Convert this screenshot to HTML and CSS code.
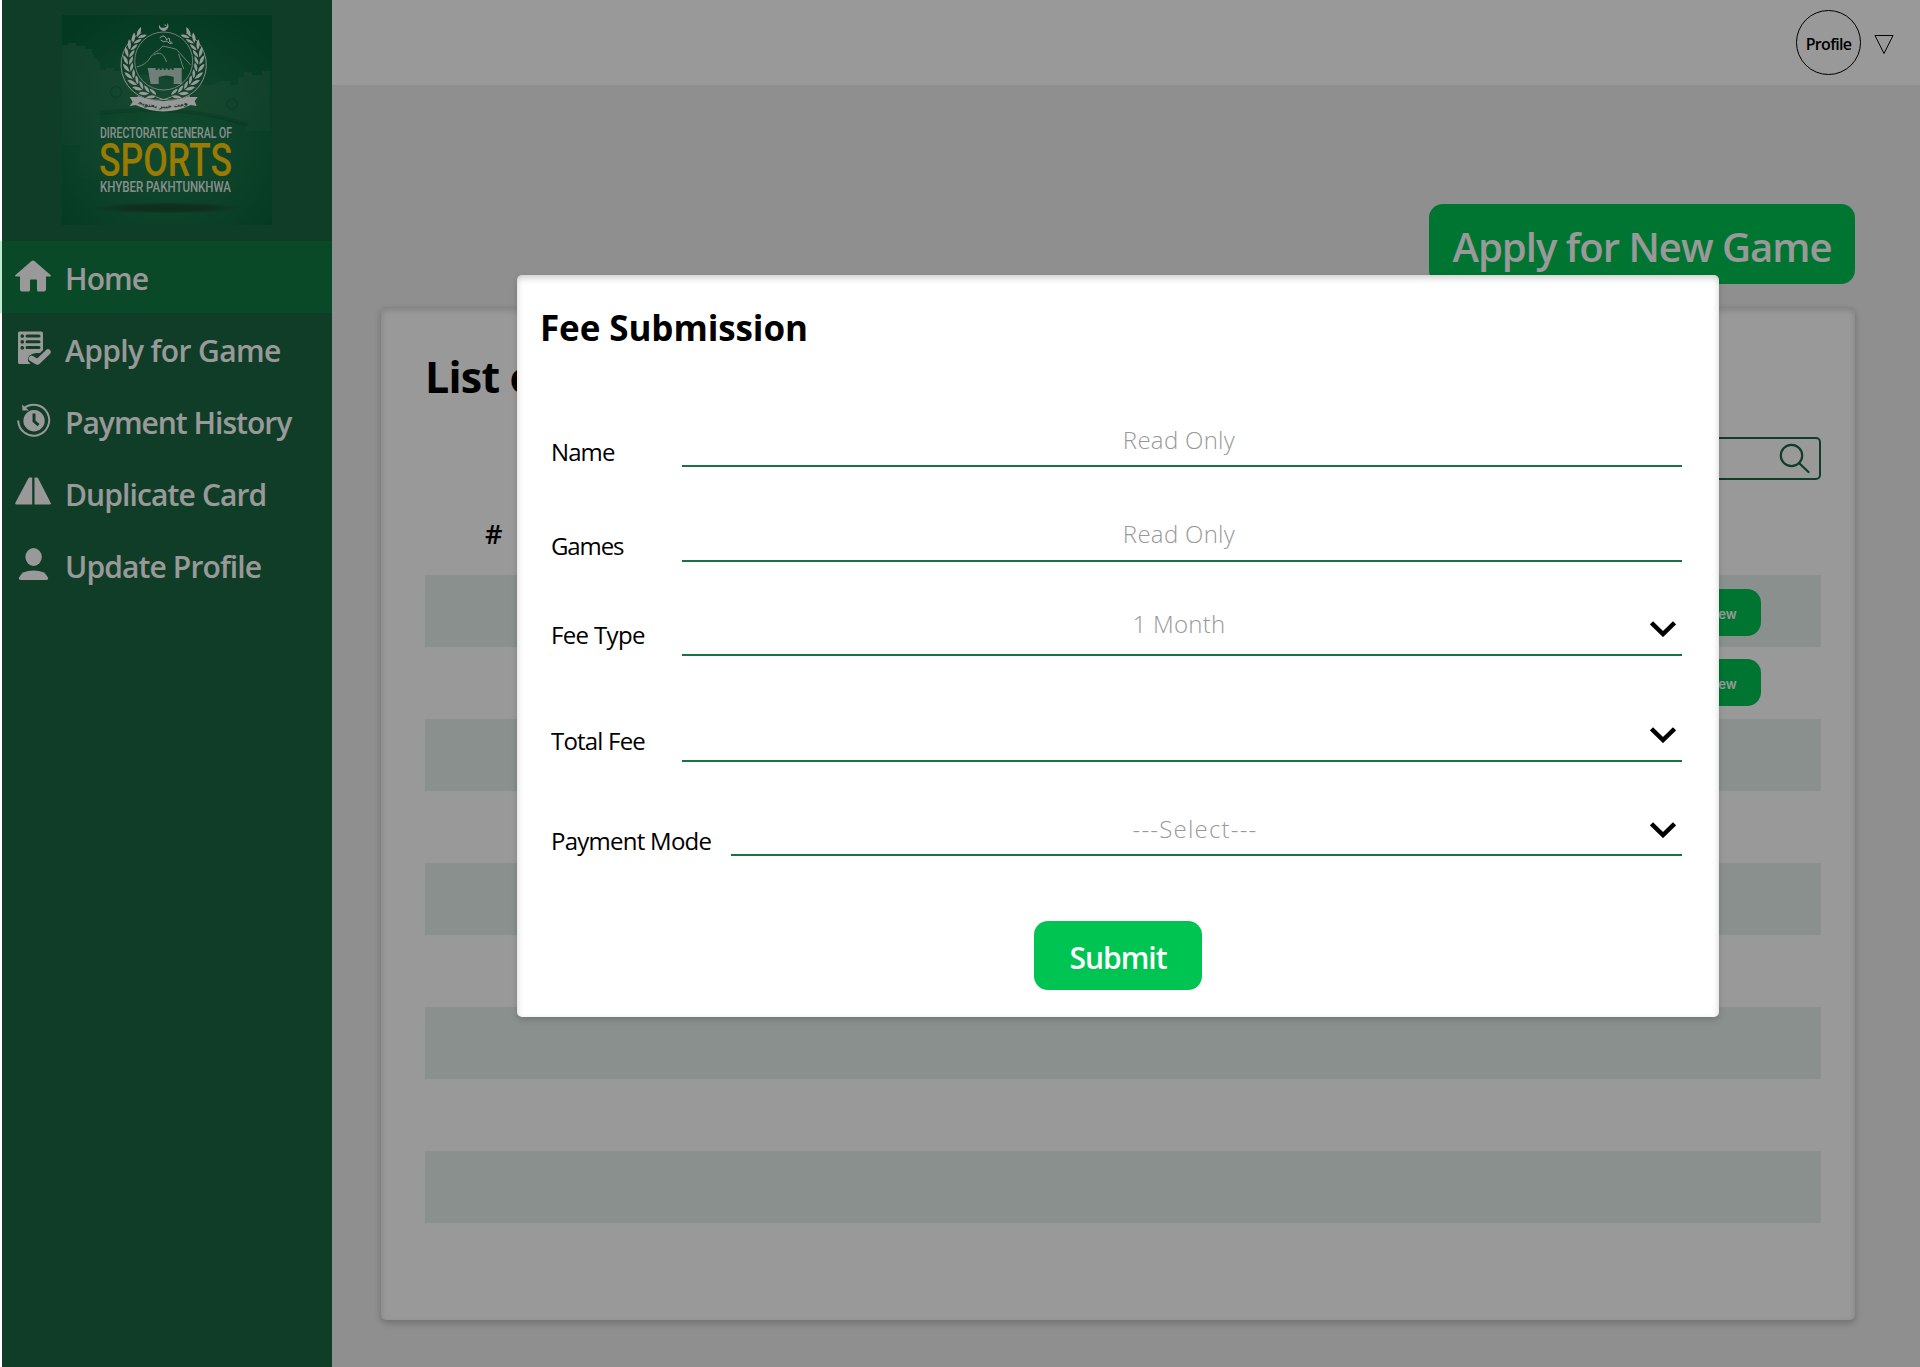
FILE: index.html
```html
<!DOCTYPE html>
<html lang="en">
<head>
<meta charset="utf-8">
<title>Directorate General of Sports</title>
<link rel="stylesheet" href="styles.css">
</head>
<body>
<div class="app">
  <aside class="sidebar">
    <div class="brand">
      <svg class="logo" viewBox="0 0 210 210">
        <defs>
          <radialGradient id="glow" cx="50%" cy="60%" r="70%">
            <stop offset="0" stop-color="#1e7d4e"/><stop offset=".6" stop-color="#136c43"/><stop offset="1" stop-color="#065f37"/>
          </radialGradient>
          <radialGradient id="floor"><stop offset="0" stop-color="#1c4a32"/><stop offset=".6" stop-color="#1c4a32" stop-opacity=".8"/><stop offset="1" stop-color="#1c4a32" stop-opacity="0"/></radialGradient>
          <linearGradient id="wall" x1="0" y1="0" x2="0" y2="1"><stop offset="0" stop-color="#4b8466" stop-opacity=".35"/><stop offset="1" stop-color="#4b8466" stop-opacity=".05"/></linearGradient>
          <g id="leaf">
            <path d="M-5-36.500Q-2.500-42 4.500-42Q2.500-37-5-36.500Z"/>
            <path d="M-5-35.500Q0-36.500 4-32Q-1-30.500-5-35.500Z"/>
          </g>
          <g id="branch">
            <use href="#leaf" transform="rotate(-40)"/><use href="#leaf" transform="rotate(-52)"/><use href="#leaf" transform="rotate(-64)"/><use href="#leaf" transform="rotate(-76)"/><use href="#leaf" transform="rotate(-88)"/><use href="#leaf" transform="rotate(-100)"/><use href="#leaf" transform="rotate(-112)"/><use href="#leaf" transform="rotate(-124)"/><use href="#leaf" transform="rotate(-136)"/><use href="#leaf" transform="rotate(-148)"/><use href="#leaf" transform="rotate(-160)"/>
            <path d="M-23-29A36 36 0 0 0 8 37" fill="none" stroke="#fff" stroke-width=".9"/>
          </g>
        </defs>
        <rect width="210" height="210" fill="url(#glow)"/>
        <path d="M0 30h6v-2h8v3h9v3h7v5l8 9v7h6v-2h8v3h8v4h30l40 10h20l8-4h10v4h8v-8h6v-5h8v3h10v-4h8v60h-25v-7Q120 88 38 99v65H18v-34H0Z" fill="url(#wall)"/>
        <path d="M38 98Q120 88 186 110" fill="none" stroke="#0a4e2e" stroke-width="4" opacity=".3"/>
        <g fill="none" stroke="#0b5532" stroke-width="1.500" opacity=".4"><circle cx="54" cy="77" r="5.500"/><circle cx="170" cy="89" r="5"/></g>
        <g transform="translate(101.700 46)" fill="#fff">
          <g transform="scale(.97)"><use href="#branch"/><use href="#branch" transform="scale(-1 1)"/></g>
          <g fill="none" stroke="#fff" stroke-width=".7">
            <circle r="29"/>
            <path d="M-27 6C-20 4-17 2-13-4S-4-10-1-15L8-13Q13-13 16-8L27 4M-10-6Q-4-10 0-5L3 1M15-7L20 8"/>
            <path d="M-4-23Q1-28 3-21Q6-25 6-21Q5-18 8-19M-3-21Q0-18 3-20Q6-16 9-18" stroke-width="1"/>
          </g>
          <path d="M-16 7h8v2h2v-1.500h2V9h2V7.500h2V9h2V7.500h2V9h2V7.500h2V9h2V7h8v16h-8v-7q-7-3-15 0v7h-8Z" fill-opacity=".7"/>
          <path d="M-4.500-36.500A4.700 4.700 0 1 0 3.500-38A4 4 0 1 1-4.500-36.500ZM1-37l2 1.500-2 .5Z"/>
          <path d="M-34 36l8 0v-1Q0 45 26 35v1h8l-3 4 2 5-6-1Q0 57-28 44l-6 1 3-4Z"/>
          <path id="ribbon" d="M-24 43.500Q0 51 24 43.500" fill="none"/>
          <text class="motto" text-anchor="middle"><textPath href="#ribbon" startOffset="50%">حکومت خیبر پختونخوا</textPath></text>
        </g>
        <g class="logo-text">
          <text x="38" y="122.500" font-size="14.500" textLength="132" lengthAdjust="spacingAndGlyphs">DIRECTORATE GENERAL OF</text>
          <text class="gold" x="37" y="160.500" font-size="46" textLength="133" lengthAdjust="spacingAndGlyphs">SPORTS</text>
          <text x="38" y="177" font-size="15.500" textLength="131" lengthAdjust="spacingAndGlyphs">KHYBER PAKHTUNKHWA</text>
        </g>
        <ellipse cx="105" cy="193" rx="74" ry="5.500" fill="url(#floor)"/>
      </svg>
    </div>
    <nav class="nav">
      <a class="nav-item active"><svg class="ico" viewBox="0 0 36 36"><path d="M18 1.500Q19 1.500 20 2.500L35.500 16Q36.500 17.500 35 17.500H31V30.500Q31 32.500 29 32.500H23.500Q22 32.500 22 31V21.500Q22 20.500 21 20.500H16Q15 20.500 15 21.500V31Q15 32.500 13.500 32.500H7Q5 32.500 5 30.500V17.500H1Q-.5 17.500.5 16L16 2.500Q17 1.500 18 1.500Z"/></svg><span class="t-home">Home</span></a>
      <a class="nav-item"><svg class="ico" viewBox="0 0 36 36"><path fill-rule="evenodd" d="M4.500.5H26Q28 .5 28 2.500V19L25 22H21Q12 23 13 30L15.500 33H4.500Q3 33 3 31.500V2Q3 .5 4.500.5ZM12 3.500a1.500 1.500 0 0 0 0 3H24a1.500 1.500 0 0 0 0-3ZM12 9.200a1.500 1.500 0 0 0 0 3H24a1.500 1.500 0 0 0 0-3ZM12 15a1.500 1.500 0 0 0 0 3H24a1.500 1.500 0 0 0 0-3ZM7.200 3.200a1.800 1.800 0 1 0 .1 0ZM7.200 9a1.800 1.800 0 1 0 .1 0ZM7.200 15a1.800 1.800 0 1 0 .1 0Z"/><path d="M16.500 27.500L22.500 31L33 21" fill="none" stroke="#fff" stroke-width="5.500" stroke-linecap="round" stroke-linejoin="round"/></svg><span class="t-apply">Apply for Game</span></a>
      <a class="nav-item"><svg class="ico" viewBox="0 0 36 36"><path fill-rule="evenodd" d="M19 7a10.700 10.700 0 1 0 .1 0ZM17.500 10.500h3v7l4 3.500-2 2.300-5-4.500Z"/><path d="M8.500 5.500A15.500 15.500 0 1 1 3.200 17.500" fill="none" stroke="#fff" stroke-width="2"/><path d="M7 1.500L7.500 7.500H14Z"/></svg><span class="t-pay">Payment History</span></a>
      <a class="nav-item"><svg class="ico" viewBox="0 0 36 36"><path d="M14.500 2.500H17.200V29.500H1.500Q-.3 29.500.5 27.500L13 4Q13.500 2.500 14.500 2.500ZM22 2.500H19.500V29.500H34.500Q36.800 29.500 35.500 27.500L23.500 4Q23 2.500 22 2.500Z"/></svg><span class="t-dup">Duplicate Card</span></a>
      <a class="nav-item"><svg class="ico" viewBox="0 0 36 36"><ellipse cx="18.600" cy="10" rx="8.200" ry="9"/><path d="M6 33Q3.500 33 4 30.500Q6.500 23.500 18.500 23.500T33 30.500Q33.500 33 31 33Z"/></svg><span class="t-upd">Update Profile</span></a>
    </nav>
  </aside>
  <div class="content">
    <header class="topbar">
      <span class="avatar">Profile</span>
      <svg class="caret" viewBox="0 0 20 21"><path d="M1 1.500H19L10 19.500Z" fill="none" stroke="#000" stroke-width="1"/></svg>
    </header>
    <div class="actions"><button class="apply-btn">Apply for New Game</button></div>
    <main class="card">
      <h1 class="card-title">List of Games</h1>
      <div class="search"><svg class="lens" viewBox="0 0 32 32"><circle cx="13.500" cy="13.500" r="10.700"/><path d="M21 21L30.500 30"/></svg></div>
      <div class="table">
        <div class="thead">#</div>
        <div class="trow odd"><button class="view-btn">View</button></div>
        <div class="trow second"><button class="view-btn">View</button></div>
        <div class="trow odd"></div><div class="trow"></div>
        <div class="trow odd"></div><div class="trow"></div>
        <div class="trow odd"></div><div class="trow"></div>
        <div class="trow odd"></div>
      </div>
    </main>
  </div>
</div>
<div class="overlay">
  <form class="modal">
    <h2 class="modal-title">Fee Submission</h2>
    <div class="row"><label class="l-name">Name</label><div class="field"><span class="ph ph-ro">Read Only</span></div></div>
    <div class="row games"><label class="l-games">Games</label><div class="field"><span class="ph ph-ro">Read Only</span></div></div>
    <div class="row fee"><label class="l-fee">Fee Type</label><div class="field select"><span class="ph ph-month">1 Month</span><svg class="chev" viewBox="0 0 26 16"><path d="M1.500 1.800L13 13L24.500 1.800"/></svg></div></div>
    <div class="row total"><label class="l-total">Total Fee</label><div class="field select"><span class="ph"></span><svg class="chev" viewBox="0 0 26 16"><path d="M1.500 1.800L13 13L24.500 1.800"/></svg></div></div>
    <div class="row mode"><label class="l-mode">Payment Mode</label><div class="field select"><span class="ph ph-select">---Select---</span><svg class="chev" viewBox="0 0 26 16"><path d="M1.500 1.800L13 13L24.500 1.800"/></svg></div></div>
    <button type="button" class="submit">Submit</button>
  </form>
</div>
</body>
</html>
```
FILE: styles.css
```css
* { box-sizing: border-box; }
body { margin: 0; width: 1920px; height: 1367px; overflow: hidden; background: #fff; font-family: "Open Sans", "Noto Sans", sans-serif; color: #000; }
button { border: 0; padding: 0; font-family: inherit; color: #fff; background: #00c452; white-space: nowrap; }
h1, h2 { margin: 0; white-space: nowrap; }
.app { display: flex; height: 1367px; padding-left: 2px; }

.sidebar { width: 330px; background: #196741; }
.brand { height: 241px; padding: 15px 0 0 60px; }
.logo { display: block; width: 210px; height: 210px; }
.logo-text { font-family: Roboto, sans-serif; font-weight: 500; fill: #fff; fill-opacity: .9; }
.logo-text .gold { fill: #ffcb05; fill-opacity: 1; }
.motto { font: bold 6px "DejaVu Sans", sans-serif; fill: #17663f; }
.nav-item { display: flex; align-items: center; gap: 14px; height: 72px; padding-left: 13px; color: #fff; font-size: 30px; font-weight: 600; line-height: 40px; white-space: nowrap; }
.nav-item.active { background: #117b43; box-shadow: -2px 0 #bfecd0; }
.nav-item span { padding-top: 3px; }
.t-home { letter-spacing: -.9px; }
.t-apply { letter-spacing: -.63px; }
.t-pay { letter-spacing: -1px; }
.t-dup, .t-upd { letter-spacing: -.88px; }
.ico { flex: none; width: 36px; height: 36px; fill: #fff; }

.content { flex: 1; background: #eee; }
.topbar { display: flex; align-items: center; justify-content: flex-end; gap: 13px; height: 85px; padding-right: 26px; background: #fff; }
.avatar { display: flex; align-items: center; justify-content: center; width: 65px; height: 65px; padding-top: 3px; border: 1px solid #000; border-radius: 50%; font-size: 16px; font-weight: 600; letter-spacing: -.7px; }
.caret { width: 20px; height: 21px; margin-top: 4px; }
.actions { display: flex; justify-content: flex-end; height: 222px; padding: 119px 65px 0 0; }
.apply-btn { width: 426px; height: 80px; padding-top: 4px; border-radius: 14px; font-size: 40px; font-weight: 600; letter-spacing: -.97px; }
.card { width: 1474px; height: 1013px; margin-left: 49px; padding: 41px 34px 0 44px; border-radius: 5px; background: #fff; box-shadow: 0 3px 6px rgba(0,0,0,.22), inset 0 3px 6px rgba(0,0,0,.16); }
.card-title { height: 89px; font-size: 43px; line-height: 58px; letter-spacing: -.8px; }
.search { display: flex; align-items: center; justify-content: flex-end; width: 600px; height: 43px; margin-left: auto; padding: 0 9px 2px 0; border: 2px solid #196741; border-radius: 5px; }
.lens { width: 32px; height: 32px; fill: none; stroke: #196741; stroke-width: 2.2; stroke-linecap: round; }
.thead { height: 95px; padding: 37px 0 0 60px; font-size: 27px; font-weight: 600; line-height: 34px; }
.trow { display: flex; justify-content: flex-end; height: 72px; padding: 14px 60px 0 0; }
.trow.odd { background: #e5f0ec; }
.trow.second { padding-top: 12px; }
.view-btn { width: 78px; height: 47px; padding: 2px 2px 0 0; border-radius: 14px; font: 600 13px "Inter", sans-serif; }

.overlay { position: absolute; inset: 0 0 0 2px; padding: 275px 0 0 515px; background: rgba(0,0,0,.4); }
.modal { width: 1202px; height: 742px; padding: 25px 37px 0 34px; border-radius: 5px; background: #fff; box-shadow: 0 3px 6px rgba(0,0,0,.16), inset 0 3px 6px rgba(0,0,0,.2); }
.modal-title { height: 73px; margin-left: -11px; font-size: 35px; line-height: 56px; letter-spacing: -.1px; }
.row { display: flex; align-items: flex-end; height: 94px; font-size: 24px; line-height: 30px; white-space: nowrap; }
.row label { width: 131px; padding-bottom: 0; font-weight: 500; }
.l-name { letter-spacing: -.9px; }
.l-games { letter-spacing: -1.1px; }
.l-fee { letter-spacing: -.65px; }
.l-total { letter-spacing: -.8px; }
.l-mode { letter-spacing: -.74px; }
.field { display: flex; align-items: flex-end; flex: 1; padding: 0 6px 10px 0; border-bottom: 2px solid #1b7145; }
.ph { flex: 1; min-height: 30px; text-align: center; font-weight: 300; color: #999; }
.ph-ro, .ph-month { letter-spacing: .3px; }
.ph-select { letter-spacing: 1.2px; }
.field.select { padding: 0 6px 15px 26px; }
.chev { width: 26px; height: 16px; margin-bottom: 2px; fill: none; stroke: #000; stroke-width: 4.5; }
.games { height: 95px; }
.row.games label { padding-bottom: 1px; }
.games .field { padding-bottom: 11px; }
.row.fee label, .row.total label { padding-bottom: 6px; }
.total { height: 106px; }
.row.mode label { width: 180px; }
.mode .field.select { padding: 0 6px 10px 9px; }
.mode .chev { margin-bottom: 6px; }
.submit { display: block; width: 168px; height: 69px; margin: 65px 0 0 483px; padding-top: 3px; border-radius: 14px; font-size: 30px; font-weight: 600; letter-spacing: -1px; }
```
